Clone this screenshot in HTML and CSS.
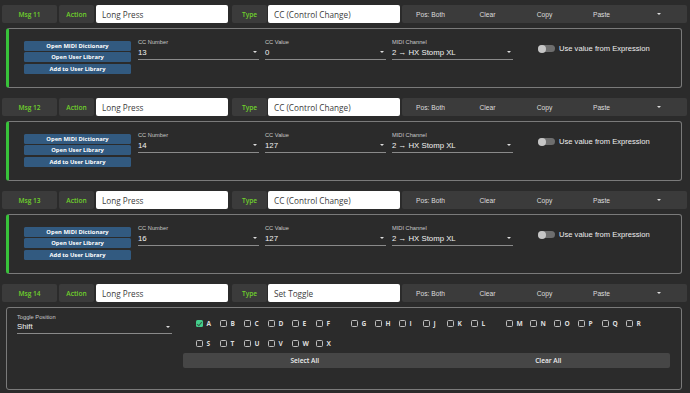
FILE: index.html
```html
<!DOCTYPE html>
<html>
<head>
 <meta charset="utf-8"/>
 <title>Messages</title>
<link rel="stylesheet" href="styles.css">
</head>
<body>

<!-- _______________________________________________________________ -->
<div class="msg">
 <div class="head">
  <div class="tag tag-msg">Msg 11</div>
  <div class="tag tag-act">Action</div>
  <div class="inp">Long Press</div>
  <div class="tag tag-type">Type</div>
  <div class="inp">CC (Control Change)</div>
  <div class="tools"><span>Pos: Both</span><span>Clear</span><span>Copy</span><span>Paste</span><span><i class="caret"></i></span></div>
 </div>
 <div class="panel cc">
  <div class="btns">
   <div class="btn">Open MIDI Dictionary</div>
   <div class="btn">Open User Library</div>
   <div class="btn">Add to User Library</div>
  </div>
  <div class="sel"><div class="lbl">CC Number</div><div class="val">13<i class="caret"></i></div></div>
  <div class="sel"><div class="lbl">CC Value</div><div class="val">0<i class="caret"></i></div></div>
  <div class="sel"><div class="lbl">MIDI Channel</div><div class="val">2 &rarr; HX Stomp XL<i class="caret"></i></div></div>
  <div class="switch"><span class="track"><span class="knob"></span></span>Use value from Expression</div>
 </div>
</div>

<!-- _______________________________________________________________ -->
<div class="msg">
 <div class="head">
  <div class="tag tag-msg">Msg 12</div>
  <div class="tag tag-act">Action</div>
  <div class="inp">Long Press</div>
  <div class="tag tag-type">Type</div>
  <div class="inp">CC (Control Change)</div>
  <div class="tools"><span>Pos: Both</span><span>Clear</span><span>Copy</span><span>Paste</span><span><i class="caret"></i></span></div>
 </div>
 <div class="panel cc">
  <div class="btns">
   <div class="btn">Open MIDI Dictionary</div>
   <div class="btn">Open User Library</div>
   <div class="btn">Add to User Library</div>
  </div>
  <div class="sel"><div class="lbl">CC Number</div><div class="val">14<i class="caret"></i></div></div>
  <div class="sel"><div class="lbl">CC Value</div><div class="val">127<i class="caret"></i></div></div>
  <div class="sel"><div class="lbl">MIDI Channel</div><div class="val">2 &rarr; HX Stomp XL<i class="caret"></i></div></div>
  <div class="switch"><span class="track"><span class="knob"></span></span>Use value from Expression</div>
 </div>
</div>

<!-- _______________________________________________________________ -->
<div class="msg">
 <div class="head">
  <div class="tag tag-msg">Msg 13</div>
  <div class="tag tag-act">Action</div>
  <div class="inp">Long Press</div>
  <div class="tag tag-type">Type</div>
  <div class="inp">CC (Control Change)</div>
  <div class="tools"><span>Pos: Both</span><span>Clear</span><span>Copy</span><span>Paste</span><span><i class="caret"></i></span></div>
 </div>
 <div class="panel cc">
  <div class="btns">
   <div class="btn">Open MIDI Dictionary</div>
   <div class="btn">Open User Library</div>
   <div class="btn">Add to User Library</div>
  </div>
  <div class="sel"><div class="lbl">CC Number</div><div class="val">16<i class="caret"></i></div></div>
  <div class="sel"><div class="lbl">CC Value</div><div class="val">127<i class="caret"></i></div></div>
  <div class="sel"><div class="lbl">MIDI Channel</div><div class="val">2 &rarr; HX Stomp XL<i class="caret"></i></div></div>
  <div class="switch"><span class="track"><span class="knob"></span></span>Use value from Expression</div>
 </div>
</div>

<!-- _______________________________________________________________ -->
<div class="msg">
 <div class="head">
  <div class="tag tag-msg">Msg 14</div>
  <div class="tag tag-act">Action</div>
  <div class="inp">Long Press</div>
  <div class="tag tag-type">Type</div>
  <div class="inp">Set Toggle</div>
  <div class="tools"><span>Pos: Both</span><span>Clear</span><span>Copy</span><span>Paste</span><span><i class="caret"></i></span></div>
 </div>
 <div class="panel toggles">
  <div class="sel wide"><div class="lbl">Toggle Position</div><div class="val">Shift<i class="caret"></i></div></div>
  <div class="pick">
   <div class="groups">
    <div class="grp">
     <span class="ck on"><b></b>A</span><span class="ck"><b></b>B</span><span class="ck"><b></b>C</span>
     <span class="ck"><b></b>D</span><span class="ck"><b></b>E</span><span class="ck"><b></b>F</span>
    </div>
    <div class="grp">
     <span class="ck"><b></b>G</span><span class="ck"><b></b>H</span><span class="ck"><b></b>I</span>
     <span class="ck"><b></b>J</span><span class="ck"><b></b>K</span><span class="ck"><b></b>L</span>
    </div>
    <div class="grp">
     <span class="ck"><b></b>M</span><span class="ck"><b></b>N</span><span class="ck"><b></b>O</span>
     <span class="ck"><b></b>P</span><span class="ck"><b></b>Q</span><span class="ck"><b></b>R</span>
    </div>
    <div class="grp">
     <span class="ck"><b></b>S</span><span class="ck"><b></b>T</span><span class="ck"><b></b>U</span>
     <span class="ck"><b></b>V</span><span class="ck"><b></b>W</span><span class="ck"><b></b>X</span>
    </div>
   </div>
   <div class="bar"><span>Select All</span><span>Clear All</span></div>
  </div>
 </div>
</div>

</body>
</html>
```

FILE: styles.css
```css
body {
 margin:      0;
 padding:     5px 3px 0 2px;
 background:  #2b2b2b;
 font-family: "Liberation Sans", Arial, sans-serif;
 color:       #eeeeee;
}

.msg { margin-bottom: 10px; }

/* header row */
.head {
 display: flex;
 height:  18px;
}
.tag {
 background:  #3b3b3b;
 border-radius: 2px;
 color:       #6fd12c;
 font-family: "Open Sans", sans-serif;
 font-weight: 600;
 font-size:   6.6px;
 display: flex; align-items: center; justify-content: center;
}
.tag-msg  { width: 55px; margin-right: 2px; }
.tag-act  { width: 35px; margin-right: 2px; }
.tag-type { width: 35px; margin-left: 4px; margin-right: 1px; }

.inp {
 width:       132px;
 background:  #ffffff;
 border-radius: 2px;
 color:       #3c3c3c;
 font-family: "Open Sans", sans-serif;
 font-size:   8.2px;
 padding-left: 6px;
 box-sizing:  border-box;
 display: flex; align-items: center;
}

.tools {
 flex: 1;
 margin-left: 2px;
 background:  #3b3b3b;
 border-radius: 2px;
 display: flex;
 font-size:   6.7px;
 color:       #dddddd;
}
.tools span {
 flex: 1;
 display: flex; align-items: center; justify-content: center;
}

.caret {
 display: inline-block;
 width: 0; height: 0;
 border-left:  2px solid transparent;
 border-right: 2px solid transparent;
 border-top:   2.5px solid #dddddd;
}

/* panels */
.panel {
 margin:      5px 5px 0 4px;
 border:      1px solid #7a7a7a;
 border-radius: 3px;
 display:     flex;
 align-items: flex-start;
 box-sizing:  border-box;
}
.cc {
 height:      60px;
 border-left: 3px solid #38c23a;
 padding:     10px 0 0 15px;
}
.toggles {
 height:      83px;
 padding:     6px 11px 0 10px;
}

.btns {
 width:       107px;
 margin-top:  2px;
 margin-right: 7px;
}
.btn {
 height:      10px;
 margin-bottom: 1.3px;
 background:  #325a80;
 border-radius: 1.5px;
 color:       #ffffff;
 font-family: "Open Sans", sans-serif;
 font-weight: 700;
 font-size:   5.8px;
 display: flex; align-items: center; justify-content: center;
}

.sel {
 width:        121px;
 margin-right: 6px;
}
.sel.wide { width: 155px; margin-right: 11px; }
.lbl {
 height:      7px;
 line-height: 7px;
 font-size:   5.7px;
 color:       #c8c8c8;
}
.val {
 height:      12.5px;
 border-bottom: 1.5px solid #8a8a8a;
 font-size:   7.8px;
 color:       #f2f2f2;
 display: flex; align-items: center; justify-content: space-between;
 padding-right: 2px;
}
.toggles .val { height: 11.5px; }

.switch {
 margin-left: 19px;
 margin-top:  5px;
 font-size:   7.6px;
 color:       #eeeeee;
 display: flex; align-items: center;
 height: 9px;
}
.track {
 width: 17px; height: 7px;
 border-radius: 4px;
 background: #6e6e6e;
 margin-right: 4px;
 display: flex; align-items: center;
}
.knob {
 width: 8px; height: 8px;
 border-radius: 50%;
 background: #c6c6c6;
}

/* toggle picker */
.pick { flex: 1; }
.groups {
 display:   flex;
 flex-wrap: wrap;
 padding-left: 13px;
}
.grp {
 width:   155px;
 display: flex;
}
.ck {
 width:   24px;
 height:  19.5px;
 display: flex; align-items: center;
 font-family: "Open Sans", sans-serif;
 font-weight: 700;
 font-size:   6.6px;
 color:       #dddddd;
}
.ck b {
 width: 7px; height: 7px;
 box-sizing: border-box;
 border: 1.5px solid #bdbdbd;
 border-radius: 1.5px;
 margin-right: 3.5px;
}
.ck.on b {
 border: none;
 background: #43d08c;
 position: relative;
}
.ck.on b::after {
 content: "";
 position: absolute;
 left: 2.2px; top: 0.8px;
 width: 2px; height: 3.6px;
 border-right: 1.2px solid #3a5a48;
 border-bottom: 1.2px solid #3a5a48;
 transform: rotate(40deg);
}

.bar {
 display:     flex;
 height:      15px;
 background:  #464646;
 border-radius: 2px;
 font-family: "Open Sans", sans-serif;
 font-weight: 600;
 font-size:   6.6px;
 color:       #eeeeee;
}
.bar span {
 flex: 1;
 display: flex; align-items: center; justify-content: center;
}
```
